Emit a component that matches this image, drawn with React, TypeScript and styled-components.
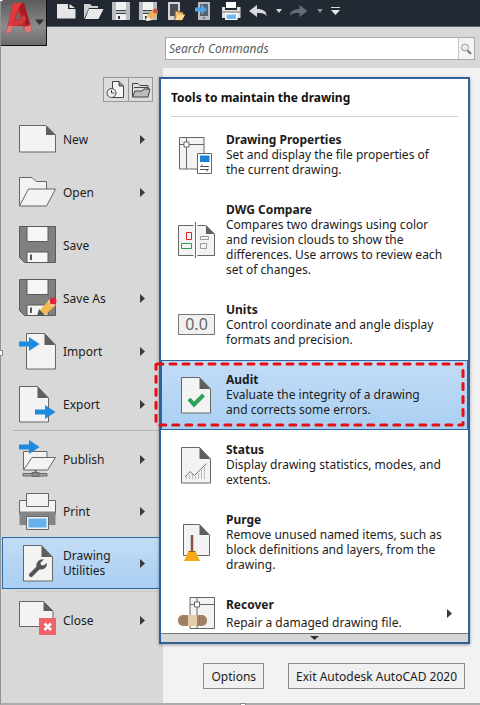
import React from "react";
import styled, { createGlobalStyle, css } from "styled-components";

const GlobalStyle = createGlobalStyle`
  *, *::before, *::after { box-sizing: border-box; }
  body {
    margin: 0;
    background: #fff;
    color: #1c1c1c;
    font-family: "Noto Sans", "Open Sans", sans-serif;
    font-size: 12px;
    line-height: 15px;
  }
  button, input { font: inherit; color: inherit; margin: 0; }
  button { cursor: pointer; }
  svg { display: block; flex: none; }
`;

const Window = styled.div`
  position: relative;
  background: #d8d8d8;
  border-left: 1px solid #929292;
  border-bottom: 2px solid #acacac;
`;

const Handle = styled.span<{ $edge: "top" | "left" | "bottom" }>`
  position: absolute;
  width: 6px;
  height: 6px;
  background: #fff;
  border: 1px solid #8a8a8a;
  ${(p) => p.$edge === "top" && css`top: -4px; left: -4px;`}
  ${(p) => p.$edge === "left" && css`top: calc(50% - 2px); left: -4px;`}
  ${(p) => p.$edge === "bottom" && css`bottom: -6px; left: calc(50% - 1px);`}
`;

const Header = styled.header`
  display: grid;
  grid-template-columns: 46px 1fr;
  grid-template-rows: 27px auto;
`;

const AppButton = styled.button`
  grid-row: 1 / span 2;
  align-self: start;
  height: 46px;
  padding: 0;
  border: 1px solid #101010;
  border-top: 0;
  border-left: 0;
  background: linear-gradient(#5c5c5c, #8c8c8c 60%, #6b6b6b);
`;

const QuickBar = styled.div`
  display: flex;
  align-items: flex-start;
  gap: 8px;
  padding: 2px 0 0 10px;
  background: #222933;
  border-bottom: 1px solid #5d636b;
`;

const QuickButton = styled.button`
  padding: 0;
  border: 0;
  background: none;
`;

const SearchBox = styled.form`
  display: flex;
  height: 23px;
  margin: 10px 5px 8px 118px;
  background: #fff;
  border: 1px solid #a9a9a9;
`;

const SearchInput = styled.input`
  flex: 1;
  min-width: 0;
  padding: 0 3px;
  border: 0;
  outline: 0;
  background: none;
  font-style: italic;
  &::placeholder { color: #5c5c5c; opacity: 1; }
`;

const SearchButton = styled.button`
  width: 16px;
  padding: 0;
  border: 0;
  border-left: 1px solid #c4c4c4;
  background: #f4f4f4;
`;

const Body = styled.div`
  display: grid;
  grid-template-columns: 158px 1fr;
`;

const Sidebar = styled.nav`
  display: flex;
  flex-direction: column;
  padding-top: 9px;
`;

const RecentToggle = styled.div`
  display: flex;
  align-self: flex-end;
  margin: 0 6px 9px 0;
  border: 1px solid #989898;
`;

const RecentButton = styled.button`
  width: 24px;
  height: 23px;
  padding: 0 2px;
  border: 0;
  background: #dcdcdc;
  & + & { border-left: 1px solid #989898; }
`;

const MenuGroup = styled.div<{ $gap?: number }>`
  display: flex;
  flex-direction: column;
  gap: ${(p) => p.$gap ?? 0}px;
  margin-top: 2px;
`;

const Rule = styled.hr<{ $faint?: boolean }>`
  width: calc(100% - 12px);
  height: 1px;
  margin: 0 0 0 12px;
  border: 0;
  background: #b4b4b4;
  ${(p) => p.$faint && css`margin-top: 2px; background: #cdcdcd;`}
`;

const MenuItem = styled.button<{ $active?: boolean }>`
  display: flex;
  align-items: center;
  gap: 6px;
  height: 52px;
  margin-left: 1px;
  padding: 0 14px 0 16px;
  border: 1px solid transparent;
  border-right: 0;
  background: none;
  text-align: left;
  ${(p) =>
    p.$active &&
    css`
      border-color: #2a67a5;
      background: linear-gradient(#c3dcf5, #a9cff3);
    `}
`;

const MenuLabel = styled.span`
  flex: 1;
`;

const Content = styled.main`
  display: flex;
  flex-direction: column;
  padding: 9px 10px 14px 0;
  background: linear-gradient(90deg, #d8d8d8 4px, #f2f2f2 4px);
`;

const Panel = styled.section`
  border: 2px solid #2f6198;
  background: #fff;
  box-shadow: 0 1px 3px rgba(0, 0, 0, 0.35);
`;

const PanelTitle = styled.h1`
  margin: 0 10px;
  padding: 11px 0;
  border-bottom: 1px solid #cfcfcf;
  color: #111;
  font-size: 12px;
  line-height: 15px;
`;

const ToolList = styled.ul`
  margin: 0;
  padding: 3px 0 0;
  list-style: none;
`;

const ToolRow = styled.li`
  position: relative;
`;

const ToolButton = styled.button<{ $active?: boolean; $compact?: boolean }>`
  display: flex;
  align-items: center;
  gap: 10px;
  width: 100%;
  padding: ${(p) => (p.$compact ? "10px 15px 2px 16px" : "11px 10px 12px 16px")};
  border: 1px solid transparent;
  background: none;
  text-align: left;
  ${(p) =>
    p.$active &&
    css`
      border-color: #2a67a5;
      background: linear-gradient(#c3dcf5, #aad0f3);
    `}
`;

const ToolText = styled.span<{ $gap?: number }>`
  display: flex;
  flex: 1;
  flex-direction: column;
  gap: ${(p) => p.$gap ?? 0}px;
  white-space: pre-line;
`;

const Highlight = styled.svg`
  position: absolute;
  top: 4px;
  left: -5px;
  width: 100%;
  height: calc(100% - 9px);
  overflow: visible;
  pointer-events: none;
`;

const ScrollStrip = styled.button`
  display: flex;
  justify-content: center;
  width: 100%;
  height: 9px;
  padding: 2px 0 0;
  border: 0;
  border-top: 1px solid #777;
  background: #d6d6d6;
`;

const Actions = styled.footer`
  display: flex;
  justify-content: flex-end;
  gap: 24px;
  padding: 19px 5px 0 0;
`;

const ActionButton = styled.button`
  height: 26px;
  padding: 0 7px;
  border: 1px solid #8b8b8b;
  background: #f0f0f0;
`;

const S = "#666";
const F = "#f3f3f3";

const Caret = () => (
  <svg width="5" height="9" viewBox="0 0 5 9"><path d="M0 0L5 4.5L0 9z" fill="#3a3a3a" /></svg>
);

const Icon = ({ children }: { children: React.ReactNode }) => (
  <svg width="38" height="38" viewBox="0 0 38 38" aria-hidden="true">{children}</svg>
);

const Sheet = ({ x }: { x: number }) => (
  <g transform={`translate(${x} 1)`}>
    <path d="M.5 .5H18.5L29.5 12V36H.5z" fill={F} stroke={S} />
    <path d="M18.5 .5L29.5 12H18.5z" fill="#5f5f5f" />
  </g>
);

const Arrow = ({ x, y }: { x: number; y: number }) => (
  <path transform={`translate(${x} ${y})`} d="M0 4.500H10V0L20.500 7L10 14V9.500H0z" fill="#1c8ade" />
);

const Floppy = () => (
  <g>
    <path d="M.5 .5H36.500V36.500H5.500L.5 31.500z" fill="#808080" stroke="#5a5a5a" />
    <path d="M8 .5H29V15.500H8zM8 26H29V36.500H8z" fill="#f6f6f6" stroke="#5a5a5a" />
    <path d="M11 28.500h2v5.500h-2z" fill="#555" />
  </g>
);

const NewIcon = () => (
  <Icon>
    <path d="M.5 5.500H27L36.500 15V32H.5z" fill={F} stroke={S} />
    <path d="M27 5.500L36.500 15H27z" fill="#5f5f5f" />
  </Icon>
);
const OpenIcon = () => (
  <Icon>
    <path d="M.5 33V4.500H13L17 8.500H27.500V17" fill={F} stroke={S} />
    <path d="M9.500 16H36.500L27.500 33H.5z" fill={F} stroke={S} />
  </Icon>
);
const SaveIcon = () => <Icon><Floppy /></Icon>;
const SaveAsIcon = () => (
  <Icon>
    <Floppy />
    <path d="M20 32L31 20L37 26L26 36z" fill="#f4b94e" />
    <path d="M20 30L25.500 36L18 37z" fill="#555" />
    <path d="M28.500 22.500L31 20L36 25L33.500 27.500z" fill="#f5e8d2" />
    <circle cx="34" cy="22" r="3.500" fill="#e0243a" />
  </Icon>
);
const ImportIcon = () => <Icon><Sheet x={7} /><Arrow x={0} y={5} /></Icon>;
const ExportIcon = () => <Icon><Sheet x={0} /><Arrow x={16} y={20} /></Icon>;
const PublishIcon = () => (
  <Icon>
    <path d="M4.500 29V11.500H28V18" fill={F} stroke={S} />
    <path d="M13 17.500H36.500L28.500 30H4.500z" fill={F} stroke={S} />
    <Arrow x={0} y={0} />
    <path d="M4 33.500H28V36H4z" fill="#aaa" stroke={S} />
    <path d="M13 32.500h7v4h-7z" fill="#8a8a8a" stroke={S} />
    <path d="M16.500 30v2" stroke={S} strokeWidth="2" />
  </Icon>
);
const PrintIcon = () => (
  <Icon>
    <path d="M.5 8.500H36.500V22H.5z" fill={F} stroke={S} />
    <path d="M.5 19.500H36.500V33H29V25H8V33H.5z" fill="#858585" />
    <path d="M7.500 1.500H29.500V14.500H7.500z" fill={F} stroke={S} />
    <path d="M7.500 24.500H29.500V37.500H7.500z" fill="#efefef" stroke={S} />
    <path d="M9.500 26.500H27.500V35.500H9.500z" fill="#65b3ee" />
  </Icon>
);
const UtilitiesIcon = () => (
  <Icon>
    <Sheet x={4} />
    <path d="M12 31L20.500 22.500" stroke="#555" strokeWidth="4" strokeLinecap="round" />
    <path d="M25 15.500A6 6 0 0 0 17.500 22.500A5 5 0 0 0 21 25.500A6 6 0 0 0 28 19L24.500 21.500L22 21L21.500 18.500z" fill="#555" />
  </Icon>
);
const CloseIcon = () => (
  <Icon>
    <path d="M.5 .5H24.500L34 10V25.500H.5z" fill={F} stroke={S} />
    <path d="M24.500 .5L34 10H24.500z" fill="#5f5f5f" />
    <path d="M20 17H37V34H20z" fill="#ef6268" />
    <path d="M25.500 22.500L32 29M32 22.500L25.500 29" stroke="#fff" strokeWidth="2.500" />
  </Icon>
);

const PropertiesIcon = () => (
  <Icon>
    <path d="M1.500 1.500H26V33H1.500z" fill={F} stroke={S} />
    <path d="M1.500 8.500H26M8.500 1.500V33" stroke={S} fill="none" />
    <path d="M6 6h5v5H6z" fill="#fff" stroke={S} />
    <path d="M19.500 17.500H33.500V37.500H19.500z" fill="#fff" stroke={S} />
    <path d="M22 19.500H31.500V26H22z" fill="#1c7fdc" />
    <path d="M22.500 30.500H31M22 33.500H30.500M24.500 28.500L22.500 30.500M28.500 35.500L30.500 33.500" stroke="#555" fill="none" />
  </Icon>
);
const CompareIcon = () => (
  <Icon>
    <path d="M.5 4.500H28L36.500 13V34.500H.5z" fill={F} stroke={S} />
    <path d="M28 4.500L36.500 13H28z" fill="#5f5f5f" />
    <path d="M17.500 1V37" stroke="#f8f8f8" strokeWidth="4" />
    <path d="M17.500 1V37" stroke="#3182c7" />
    <path d="M8.500 11.500h5v7h-5z" fill="none" stroke="#d22" />
    <path d="M3.500 22.500h10v5h-10z" fill="none" stroke="#25a052" />
    <path d="M22.500 15.500h8v3h-8zM22.500 22.500h6v5h-6z" fill="none" stroke="#999" />
  </Icon>
);

const UnitsBadge = styled.span`
  width: 37px;
  height: 21px;
  margin-right: 1px;
  border: 1px solid #777;
  background: #f0f0f0;
  color: #666;
  font-size: 16px;
  line-height: 18px;
  text-align: center;
`;

const AuditIcon = () => (
  <Icon>
    <Sheet x={3} />
    <path d="M11 23L16 28.500L25.500 19" fill="none" stroke="#2ba35a" strokeWidth="4" />
  </Icon>
);
const StatusIcon = () => (
  <Icon>
    <Sheet x={3} />
    <path d="M8.500 31v2M11.500 29v4M14.500 28v5M17.500 30v3M20.500 27v6M23.500 24v9M26.500 21v12" stroke="#bbb" fill="none" />
    <path d="M7 31L12 25.500L16.500 29.500L28.500 17.500" stroke="#777" fill="none" />
  </Icon>
);
const PurgeIcon = () => (
  <Icon>
    <path d="M5.500 1.500H21.500L31.500 12V32.500H5.500z" fill={F} stroke={S} />
    <path d="M21.500 1.500L31.500 12H21.500z" fill="#5f5f5f" />
    <path d="M14 12V28" stroke="#85543c" strokeWidth="2.500" />
    <path d="M10.500 28H17.500L22 38H6z" fill="#f8a81b" />
    <path d="M10.500 28.500h7" stroke="#a45e24" />
  </Icon>
);
const RecoverIcon = () => (
  <svg width="38" height="34" viewBox="0 0 38 34" aria-hidden="true">
    <path d="M12 1.500H36.500V32.500H12z" fill={F} stroke={S} />
    <path d="M12 8.500H36.500M19 1.500V32.500" stroke={S} />
    <path d="M16.500 6h5v5h-5z" fill="#fff" stroke={S} />
    <rect x="0" y="19" width="29" height="11" rx="5" fill="#a28164" />
    <path d="M10 19h9v11h-9z" fill="#e4cfab" />
    <path d="M4 22.500h1M7 22.500h1M4 26.500h1M7 26.500h1M21 22.500h1M24 22.500h1M21 26.500h1M24 26.500h1" stroke="#836449" />
  </svg>
);

const quickFloppy = (
  <>
    <path d="M0 0H18V18H0z" fill="#b9bcc0" />
    <path d="M4 0H14V8H4zM4 12H14V18H4z" fill="#f1f1f1" />
    <path d="M4 8.500H14M4 11.500H14" stroke="#3d444d" />
    <path d="M6 14h2v3H6z" fill="#333" />
  </>
);

const quickTools = [
  { name: "New", w: 19, art: <path d="M0 2H11V7H18.500V16.500H0zM12.500 2L18 6H12.500z" fill="#e6e6e6" /> },
  { name: "Open", w: 20, art: <><path d="M0 17V2H6L8 4H14V6H5z" fill="#cfcfcf" /><path d="M5 7H19.500L14.500 17H1z" fill="#e9e9e9" /></> },
  { name: "Save", w: 19, art: quickFloppy },
  {
    name: "Save As", w: 20,
    art: <>{quickFloppy}<path d="M8 14L14 7L19 11L13 18L7 19z" fill="#efb15a" /><path d="M8 14L13 18L7 19z" fill="#eee" /><circle cx="16.500" cy="9" r="2.500" fill="#cf5450" /></>,
  },
  {
    name: "Open from Web", w: 20,
    art: <><path d="M1 0H13V18H1z" fill="#d4d4d4" /><path d="M3 2H11V14H3z" fill="#4a5058" /><path d="M8 18V9H11L12 10H16V12L18 12L15 18z" fill="#f1c073" stroke="#6b5023" /><path d="M8 18L11 13H18L15 18z" fill="#ffd891" /></>,
  },
  {
    name: "Save to Web", w: 19,
    art: <><path d="M3 0H15V18H3z" fill="#b9bdc2" /><path d="M5 2H13V14H5z" fill="#58616c" /><path d="M8 16h2" stroke="#333" /><path d="M0 5.500H6V2L12 7.500L6 13V9.500H0z" fill="#4da5e8" /></>,
  },
  {
    name: "Plot", w: 19,
    art: <><path d="M4 0H14V6H4z" fill="#fff" /><path d="M0 5H3V8H15V5H18.500V16H0z" fill="#e1e1e1" /><path d="M0 10H18.500" stroke="#777" /><path d="M3 11H15.500V18H3z" fill="#fff" /><path d="M4.500 12.500H14V17H4.500z" fill="#6db9f2" /></>,
  },
  { name: "Undo", w: 18, art: <path d="M0 9L8 3V7C14 7 17.500 9 17.500 14C15 11 13 11 8 11V15z" fill="#d7d9dc" /> },
  { name: "Undo list", w: 7, art: <path d="M1 7H7L4 11z" fill="#d7d9dc" /> },
  { name: "Redo", w: 18, art: <path d="M17.500 9L9.500 3V7C3.500 7 0 9 0 14C2.500 11 4.500 11 9.500 11V15z" fill="#656b75" /> },
  { name: "Redo list", w: 7, art: <path d="M1 7H7L4 11z" fill="#858a92" /> },
  { name: "Customize", w: 9, art: <><path d="M0 5.500H9" stroke="#d7d9dc" /><path d="M0 8H9L4.500 13z" fill="#e6e6e6" /></> },
];

type Entry = { label: React.ReactNode; icon: React.ReactNode; arrow?: boolean; active?: boolean };

const fileItems: Entry[] = [
  { label: "New", icon: <NewIcon />, arrow: true },
  { label: "Open", icon: <OpenIcon />, arrow: true },
  { label: "Save", icon: <SaveIcon /> },
  { label: "Save As", icon: <SaveAsIcon />, arrow: true },
  { label: "Import", icon: <ImportIcon />, arrow: true },
  { label: "Export", icon: <ExportIcon />, arrow: true },
];
const outputItems: Entry[] = [
  { label: "Publish", icon: <PublishIcon />, arrow: true },
  { label: "Print", icon: <PrintIcon />, arrow: true },
  { label: <>Drawing<br />Utilities</>, icon: <UtilitiesIcon />, arrow: true, active: true },
];
const closeItems: Entry[] = [{ label: "Close", icon: <CloseIcon />, arrow: true }];

const tools = [
  { title: "Drawing Properties", text: "Set and display the file properties of\nthe current drawing.", icon: <PropertiesIcon /> },
  { title: "DWG Compare", text: "Compares two drawings using color\nand revision clouds to show the\ndifferences. Use arrows to review each\nset of changes.", icon: <CompareIcon /> },
  { title: "Units", text: "Control coordinate and angle display\nformats and precision.", icon: <UnitsBadge>0.0</UnitsBadge> },
  { title: "Audit", text: "Evaluate the integrity of a drawing\nand corrects some errors.", icon: <AuditIcon />, active: true },
  { title: "Status", text: "Display drawing statistics, modes, and\nextents.", icon: <StatusIcon /> },
  { title: "Purge", text: "Remove unused named items, such as\nblock definitions and layers, from the\ndrawing.", icon: <PurgeIcon /> },
  { title: "Recover", text: "Repair a damaged drawing file.", icon: <RecoverIcon />, submenu: true },
];

const Group = ({ items, gap }: { items: Entry[]; gap?: number }) => (
  <MenuGroup $gap={gap}>
    {items.map((item, i) => (
      <MenuItem key={i} $active={item.active}>
        {item.icon}
        <MenuLabel>{item.label}</MenuLabel>
        {item.arrow && <Caret />}
      </MenuItem>
    ))}
  </MenuGroup>
);

export default function App() {
  return (
    <>
      <GlobalStyle />
      <Window>
        <Header>
          <AppButton aria-label="Application menu">
            <svg width="45" height="45" viewBox="0 0 45 45">
              <path d="M12 3H23L31 31L25 33L22 26H12L10 32L5 33z" fill="#c4262d" />
              <path d="M12 3H21L17 9L9 31L5 33z" fill="#de3a40" />
              <path d="M21 3H23L31 31L27 30L18 8z" fill="#a81a22" />
              <path d="M17 11L20.500 18.500L13.500 20.500z" fill="#8a5a5c" />
              <path d="M5 33L7 26L12 26L10 32zM23 27L29.500 25L31 31L25 33z" fill="#e2777a" />
              <path d="M9 22C15 22 21 19 23 14L25 19C23 24 17 26 10 26z" fill="#d23940" />
              <path d="M34 19.500H43L38.500 25z" fill="#303030" />
            </svg>
          </AppButton>
          <QuickBar>
            {quickTools.map((t) => (
              <QuickButton key={t.name} aria-label={t.name}>
                <svg width={t.w} height="20" viewBox={`0 0 ${t.w} 20`}>{t.art}</svg>
              </QuickButton>
            ))}
          </QuickBar>
          <SearchBox role="search" onSubmit={(e) => e.preventDefault()}>
            <SearchInput aria-label="Search Commands" placeholder="Search Commands" />
            <SearchButton aria-label="Search">
              <svg width="14" height="14" viewBox="0 0 14 14">
                <circle cx="6" cy="5.500" r="3.500" fill="#e5eaee" stroke="#999" />
                <path d="M8.500 8.500L12 12" stroke="#777" strokeWidth="2" />
              </svg>
            </SearchButton>
          </SearchBox>
        </Header>
        <Body>
          <Sidebar>
            <RecentToggle>
              <RecentButton aria-label="Recent documents">
                <svg width="20" height="20" viewBox="0 0 20 20">
                  <path d="M6.500 1.500H13L17.500 6V17.500H6.500z" fill="#f6f6f6" stroke="#444" />
                  <path d="M13 1.500V6H17.500" fill="#888" stroke="#444" />
                  <circle cx="5.500" cy="13" r="4.500" fill="#eee" stroke="#444" />
                  <path d="M5.500 10V13H8.500" fill="none" stroke="#444" />
                </svg>
              </RecentButton>
              <RecentButton aria-label="Open documents">
                <svg width="20" height="20" viewBox="0 0 20 20">
                  <path d="M1.500 17V3.500H7L9 5.500H17V9" fill="#ddd" stroke="#444" />
                  <path d="M3 7.500H17V9.500" fill="none" stroke="#444" />
                  <path d="M1.500 17L4 11H11L13 9H19L17 17z" fill="#bbb" stroke="#444" />
                </svg>
              </RecentButton>
            </RecentToggle>
            <Group items={fileItems} gap={1} />
            <Rule />
            <Group items={outputItems} />
            <Rule $faint />
            <Group items={closeItems} />
          </Sidebar>
          <Content>
            <Panel>
              <PanelTitle>Tools to maintain the drawing</PanelTitle>
              <ToolList>
                {tools.map((t) => (
                  <ToolRow key={t.title}>
                    <ToolButton $active={t.active} $compact={t.submenu}>
                      {t.icon}
                      <ToolText $gap={t.submenu ? 3 : 0}>
                        <strong>{t.title}</strong>
                        <span>{t.text}</span>
                      </ToolText>
                      {t.submenu && <Caret />}
                    </ToolButton>
                    {t.active && (
                      <Highlight>
                        <rect width="100%" height="100%" rx="1" fill="none" stroke="#e60f14" strokeWidth="3" strokeLinecap="round" strokeDasharray="6 7" />
                      </Highlight>
                    )}
                  </ToolRow>
                ))}
              </ToolList>
              <ScrollStrip aria-label="Scroll down">
                <svg width="9" height="4" viewBox="0 0 9 4"><path d="M0 0H9L4.500 4z" fill="#333" /></svg>
              </ScrollStrip>
            </Panel>
            <Actions>
              <ActionButton>Options</ActionButton>
              <ActionButton>Exit Autodesk AutoCAD 2020</ActionButton>
            </Actions>
          </Content>
        </Body>
        <Handle $edge="top" />
        <Handle $edge="left" />
        <Handle $edge="bottom" />
      </Window>
    </>
  );
}
